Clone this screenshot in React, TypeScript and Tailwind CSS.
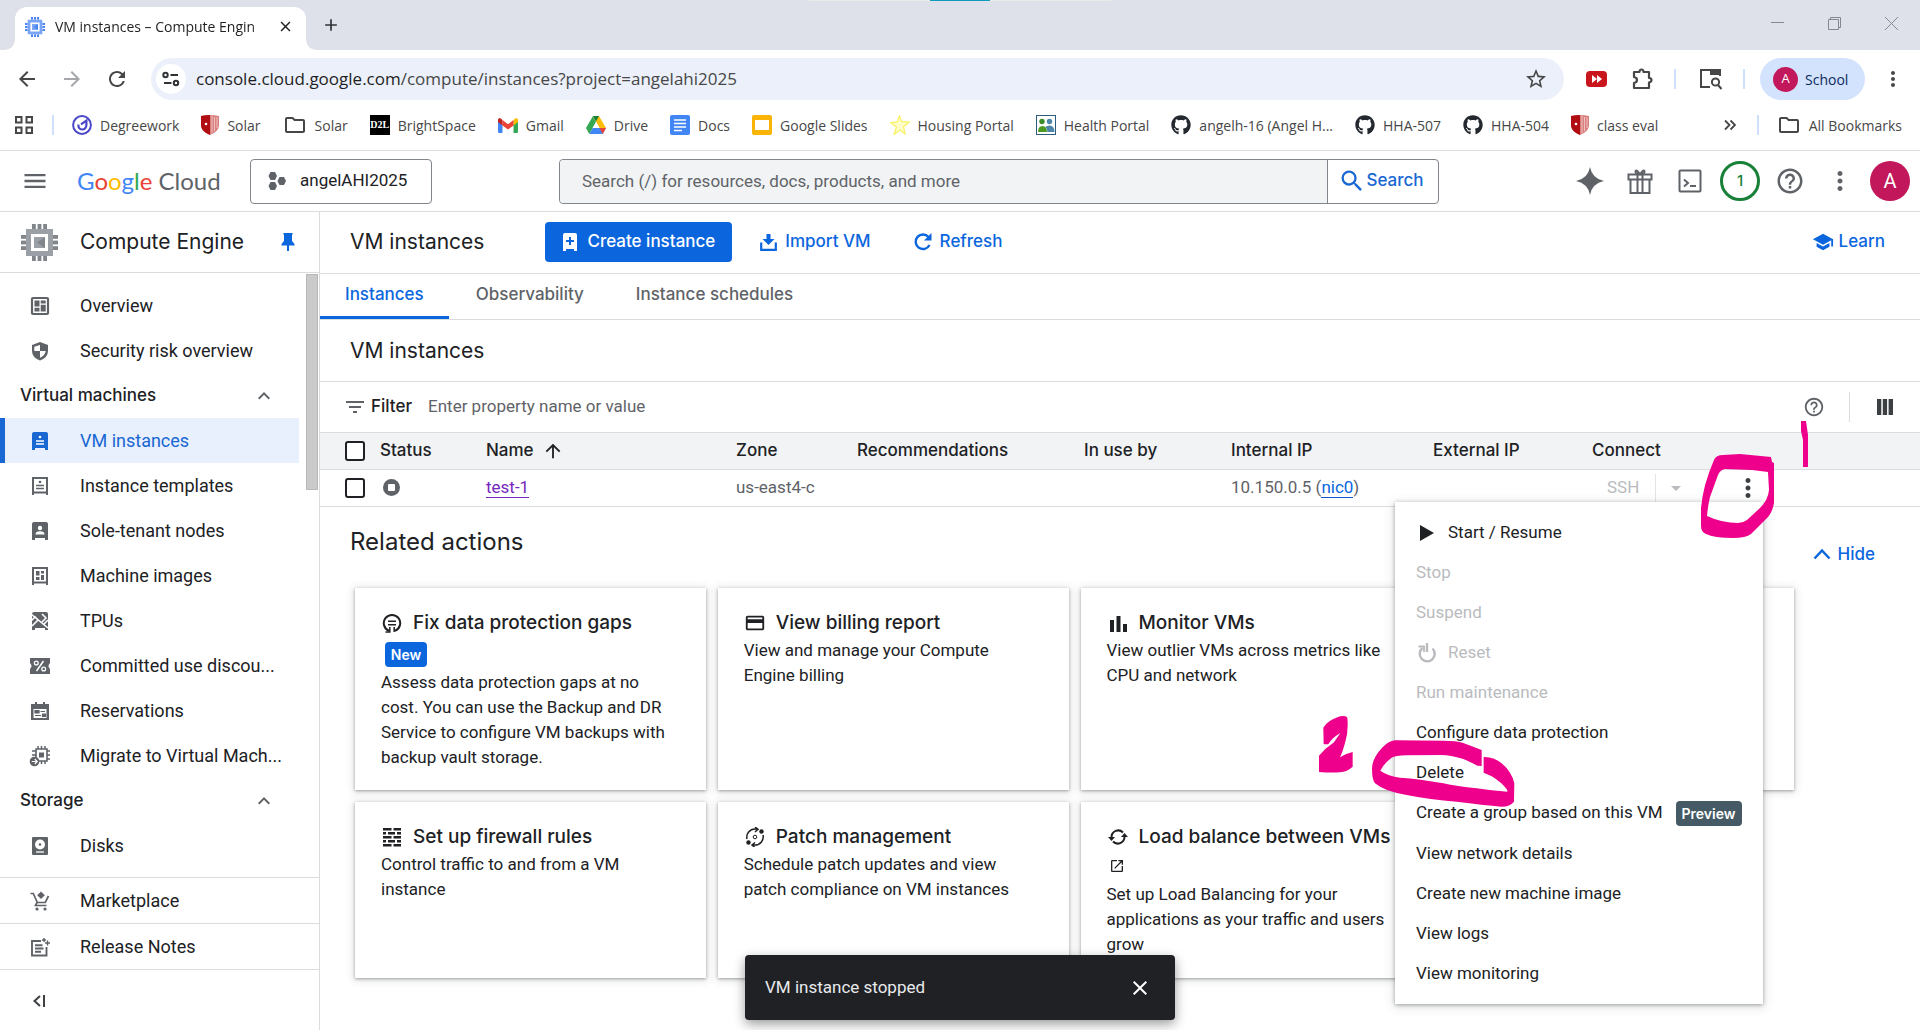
import type { ReactNode } from "react";
import {
  MdMenu, MdExpandLess, MdFilterList, MdArrowUpward, MdMoreVert, MdHelpOutline,
  MdArrowDropDown, MdSchool, MdRefresh, MdClose, MdOpenInNew, MdCreditCard, MdArrowBack,
  MdArrowForward, MdStarBorder, MdSearch, MdAdd, MdOutlineFolder,
} from "react-icons/md";
import { FaGithub } from "react-icons/fa";

const CHROME = "font-['Open_Sans','Noto_Sans',sans-serif]";
const GOOGLE = "font-['Inter','Roboto',sans-serif]";
const BODY = "font-['Roboto','Liberation_Sans',sans-serif]";

/* ---------- drawings ---------- */

function Chip({ className, body, light }: { className: string; body: string; light: string }) {
  const pins = [11, 16.6, 22.2];
  return (
    <svg viewBox="0 0 37 37" className={className} aria-hidden="true">
      {pins.map((p) => (
        <g key={p} fill={body}>
          <rect x={p} y="0" width="3.800" height="5" />
          <rect x={p} y="32" width="3.800" height="5" />
          <rect x="0" y={p} width="5" height="3.800" />
          <rect x="32" y={p} width="5" height="3.800" />
        </g>
      ))}
      <path fill={light} fillRule="evenodd" d="M5 5h27v27H5zM10 10v17h17V10z" />
      <rect x="13" y="13" width="11" height="11" fill={light} />
      <path d="M24 13v11l-8-5.500z" fill={body} />
    </svg>
  );
}

function DegreeIcon() {
  return (
    <svg viewBox="0 0 20 20" className="size-5" fill="none" stroke="#4a48c8">
      <circle cx="10" cy="10" r="8.900" strokeWidth="2" />
      <path d="M6.500 9.500c-.5 3 1.200 5 3.600 5 2.600 0 4.300-2 4.300-4.700V5.500L9 9.300" strokeWidth="2.200" />
    </svg>
  );
}

function ShieldBookmark() {
  return (
    <svg viewBox="0 0 18 20" className="h-5 w-[18px]">
      <path d="M0 1Q9-1 18 1v10q-1 6-9 9-8-3-9-9z" fill="#d9807f" />
      <path d="M0 1Q5 0 9 0v20q-8-3-9-9z" fill="#b00d12" />
      <path d="M11 1v17M13.500 2v14M16 2v11" stroke="#f2c9c8" strokeWidth=".9" />
      <circle cx="5" cy="9" r="1.300" fill="#fff" />
    </svg>
  );
}

function D2LIcon() {
  return (
    <span className="flex size-5 flex-col items-center justify-center bg-black font-['Liberation_Serif',serif] text-[10px] leading-3 font-bold text-white">
      D2L
    </span>
  );
}

function GmailIcon() {
  return (
    <svg viewBox="0 0 20 15" className="h-[15px] w-5">
      <path d="M0 2v11.500Q0 15 1.400 15H4.500V6z" fill="#4285f4" />
      <path d="M20 2v11.500Q20 15 18.600 15H15.500V6z" fill="#34a853" />
      <path d="M0 2Q0 0 2 0L4.500 2v5.500L0 4z" fill="#c5221f" />
      <path d="M20 2Q20 0 18 0l-2.500 2v5.500L20 4z" fill="#fbbc04" />
      <path d="M4.500 2L10 6.200 15.500 2v5.500L10 11.600 4.500 7.500z" fill="#ea4335" />
    </svg>
  );
}

function DriveIcon() {
  return (
    <svg viewBox="0 0 20 18" className="h-[18px] w-5">
      <path d="M7 0L0 12l3.300 6L10 6z" fill="#34a853" />
      <path d="M7 0h6l7 12h-6.500z" fill="#fbbc04" />
      <path d="M3.300 18h13.400l3.300-6H6.600z" fill="#4285f4" />
      <path d="M20 12h-6.500l3.200 6z" fill="#ea4335" />
      <path d="M7 0h6L10 5.500z" fill="#188038" />
      <path d="M10 6l3.500 6H6.600z" fill="#fff" />
    </svg>
  );
}

function DocsIcon() {
  return (
    <svg viewBox="0 0 20 20" className="size-5">
      <rect width="20" height="20" rx="2" fill="#4285f4" />
      <path d="M4 5h12M4 8.500h12M4 12h12M4 15.500h8" stroke="#fff" strokeWidth="1.700" />
    </svg>
  );
}

function SlidesIcon() {
  return (
    <svg viewBox="0 0 20 20" className="size-5">
      <rect width="20" height="20" rx="2" fill="#f9b406" />
      <rect x="3" y="5" width="14" height="10" fill="#fff" />
    </svg>
  );
}

function StarIcon() {
  return (
    <svg viewBox="0 0 20 20" className="size-5">
      <path d="M9.500 1l2 5.500L19.500 7l-6 4.500L15 19l-5-4-6 4.500L6.500 12 .5 7.500l6.500-.5z" fill="#fefcc8" stroke="#f8f266" strokeWidth="1.300" />
    </svg>
  );
}

function HealthIcon() {
  return (
    <svg viewBox="0 0 20 20" className="size-5">
      <rect x=".5" y=".5" width="19" height="19" fill="#fff" stroke="#2d5d7e" />
      <circle cx="6" cy="6.500" r="2.700" fill="#3c8a2b" />
      <circle cx="13.500" cy="6.500" r="2.700" fill="#4d86ab" />
      <path d="M2 17q0-6 4.500-6T11 17z" fill="#4a9a23" />
      <path d="M9.500 12q1-1.500 4-1.500 5 0 5 6.500h-7q0-3-2-5z" fill="#4d86ab" />
    </svg>
  );
}

function AppsIcon() {
  return (
    <svg viewBox="0 0 20 20" className="size-5" fill="none" stroke="#474747" strokeWidth="2">
      <path d="M2 2h5.500v5.500H2zM12.500 2H18v5.500h-5.500zM2 12.500h5.500V18H2zM12.500 12.500H18V18h-5.500z" />
    </svg>
  );
}

function TuneIcon() {
  return (
    <svg viewBox="0 0 18 16" className="h-4 w-[18px]" fill="none" stroke="#303236" strokeWidth="2">
      <circle cx="3.500" cy="4" r="2.200" />
      <path d="M8.500 4H16M2 12h7.500" />
      <circle cx="14" cy="12" r="2.200" />
    </svg>
  );
}

function PuzzleIcon() {
  return (
    <svg viewBox="0 0 24 24" className="size-6" fill="none" stroke="#474747" strokeWidth="2.200" strokeLinejoin="round">
      <path d="M4 5h5.500q0-2.500 2-2.500t2 2.500H19v6q2.500 0 2.500 2T19 15.500V21H4v-5q3-.5 3-3t-3-3z" />
    </svg>
  );
}

function LensIcon() {
  return (
    <svg viewBox="0 0 24 22" className="h-[22px] w-6" fill="none" stroke="#474747" strokeWidth="2">
      <path d="M11 19H2V2h19v6" />
      <path d="M12 2h9v4h-9z" fill="#474747" />
      <circle cx="16.500" cy="14" r="3.600" />
      <path d="M19 17l3.500 4" />
    </svg>
  );
}

const G60 = "#5f6368";

function NodeFrame({ children, filled }: { children: ReactNode; filled?: boolean }) {
  return (
    <svg viewBox="0 0 20 20" className="size-5" aria-hidden="true">
      {filled ? (
        <path d="M4 1h12q2 0 2 2v16h-3v-2H5v2H2V3q0-2 2-2z" fill="currentColor" />
      ) : (
        <path d="M3 19V2h14v17M3 16.500h14" fill="none" stroke="currentColor" strokeWidth="2" />
      )}
      {children}
    </svg>
  );
}

const NavIcons: Record<string, ReactNode> = {
  overview: (
    <svg viewBox="0 0 20 20" className="size-5" fill="none" stroke="currentColor">
      <rect x="2" y="2" width="16" height="16" rx="1" strokeWidth="2.200" />
      <path d="M4.500 4.500h5v6h-5zM10.700 4.500h5v3h-5zM4.500 11.700h5v3.800h-5zM10.700 8.700h5v6.800h-5z" fill="currentColor" stroke="none" />
    </svg>
  ),
  security: (
    <svg viewBox="0 0 20 20" className="size-5">
      <path d="M10 1l8 3v6q0 6.500-8 9.500-8-3-8-9.500V4z" fill="currentColor" />
      <path d="M10 4v6H4.300V5.800zM10 10h5.700q-.7 4.500-5.700 6.800z" fill="#fff" />
    </svg>
  ),
  vm: (
    <NodeFrame filled>
      <circle cx="10" cy="6" r="1.300" fill="#fff" />
      <path d="M6 10h8M6 13h8" stroke="#fff" strokeWidth="1.300" />
    </NodeFrame>
  ),
  template: (
    <NodeFrame>
      <circle cx="10" cy="6" r="1.300" fill="currentColor" />
      <path d="M6 9.500h8M6 12.500h8" stroke="currentColor" strokeWidth="1.400" />
    </NodeFrame>
  ),
  sole: (
    <NodeFrame filled>
      <circle cx="10" cy="7" r="2.200" fill="#fff" />
      <path d="M5.500 13.500q0-3.300 4.500-3.300t4.500 3.300z" fill="#fff" />
    </NodeFrame>
  ),
  image: (
    <NodeFrame>
      <path d="M6 5h3.500v4.500H6zM11 5h3v2.500h-3zM6 11h3.500v3H6zM11 9h3v5h-3z" fill="currentColor" />
    </NodeFrame>
  ),
  tpu: (
    <svg viewBox="0 0 20 20" className="size-5">
      <path d="M4 1h12q2 0 2 2v16h-3v-2H5v2H2V3q0-2 2-2z" fill="currentColor" />
      <path d="M1 3l17 14M1 10l4-4 3 3-6 6M12 3l4 4-4 4M18 9l-4 4" stroke="#fff" strokeWidth="1.600" fill="none" />
    </svg>
  ),
  discount: (
    <svg viewBox="0 0 22 18" className="h-[18px] w-[22px]">
      <path d="M1 1h20v5q-3 3 0 6v5H1v-5q3-3 0-6z" fill="currentColor" />
      <path d="M14.500 4l-7 10" stroke="#fff" strokeWidth="1.500" />
      <circle cx="7.300" cy="6" r="1.900" stroke="#fff" strokeWidth="1.300" fill="none" />
      <circle cx="14.700" cy="12" r="1.900" stroke="#fff" strokeWidth="1.300" fill="none" />
    </svg>
  ),
  reservation: (
    <svg viewBox="0 0 20 20" className="size-5">
      <path d="M5 1h2v2h6V1h2v2h4v16H1V3h4z" fill="currentColor" />
      <path d="M3.500 8h13v9h-13z" fill="#fff" />
      <path d="M5 9.500h4V12H5zM10.500 10.500H15M5 14.500h6M12.500 13.200h3v2.300h-3z" fill="currentColor" stroke="currentColor" strokeWidth="1.200" />
    </svg>
  ),
  migrate: (
    <svg viewBox="0 0 22 22" className="size-[22px]">
      <path d="M7 4h11v12H7z" fill="none" stroke="currentColor" strokeWidth="1.600" />
      <path d="M10 7.500h5v5h-5z" fill="currentColor" />
      <path d="M9 1v3M12.500 1v3M16 1v3M18 6h3M18 10h3M18 14h3M12.500 16v3M16 16v3M3 6h4M3 10h4" stroke="currentColor" strokeWidth="1.500" />
      <circle cx="5.500" cy="16.500" r="4.800" fill="currentColor" />
      <path d="M2.800 16.500H8M5.800 14l2.400 2.500L5.800 19" stroke="#fff" strokeWidth="1.200" fill="none" />
    </svg>
  ),
  disk: (
    <svg viewBox="0 0 20 20" className="size-5">
      <rect x="2" y="1" width="16" height="18" rx="1" fill="currentColor" />
      <circle cx="10" cy="8.500" r="5" fill="#fff" />
      <circle cx="10" cy="8.500" r="1.300" fill="currentColor" />
      <path d="M6 16h8" stroke="#fff" strokeWidth="1.300" />
    </svg>
  ),
  market: (
    <svg viewBox="0 0 20 20" className="size-5" fill="none" stroke="currentColor" strokeWidth="1.700">
      <path d="M.5 2.500h2.800l4 9h8L18.500 5M7 11.500l-1.500 3h11" />
      <path d="M11 .5l3.800 3.700L11 8 7.200 4.200z" fill="currentColor" stroke="none" />
      <circle cx="7" cy="18" r="1.600" fill="currentColor" stroke="none" />
      <circle cx="15" cy="18" r="1.600" fill="currentColor" stroke="none" />
    </svg>
  ),
  notes: (
    <svg viewBox="0 0 20 20" className="size-5" fill="none" stroke="currentColor" strokeWidth="1.900">
      <path d="M11 4H2v14.500h14.500V10M5 8.300h7.500M5 11.500h8.500M5 14.700h6" />
      <path d="M14 1v4M12 3h4M17.500 3.500v5M15 6h5" strokeWidth="1.400" />
    </svg>
  ),
};

const CardIcons: Record<string, ReactNode> = {
  backup: (
    <svg viewBox="0 0 20 20" className="size-5" fill="none" stroke="currentColor" strokeWidth="2">
      <path d="M7 17.800A8.200 8.200 0 1 1 13 17.800" />
      <path d="M6 8.300h8M6 11.700h8" strokeWidth="1.500" />
      <path d="M7.800 14v5H3.500M12.200 14v5" strokeWidth="1.500" />
    </svg>
  ),
  billing: <MdCreditCard className="size-[22px]" />,
  monitor: (
    <svg viewBox="0 0 20 20" className="size-5" fill="currentColor">
      <path d="M2 7h4v12H2zM8.500 3h4v16h-4zM15 11h4v8h-4z" />
    </svg>
  ),
  firewall: (
    <svg viewBox="0 0 20 20" className="size-5" fill="currentColor">
      <path d="M1 1h8.500v2.600H1zM11.500 1H19v2.600h-7.500zM1 5h3v2.600H1zM6 5h7v2.600H6zM15 5h4v2.600h-4zM1 9h8.500v2.600H1zM11.500 9H19v2.600h-7.500zM1 13h3v2.600H1zM6 13h7v2.600H6zM15 13h4v2.600h-4zM1 17h8.500v2.600H1zM11.500 17H19v2.600h-7.500z" />
    </svg>
  ),
  patch: (
    <svg viewBox="0 0 20 20" className="size-5" fill="none" stroke="currentColor" strokeWidth="1.500">
      <path d="M2 12A8.200 8.200 0 0 1 10 2h2M10 0l3 2.200L10 5M18 8a8.200 8.200 0 0 1-8 10H8M10 15.500L7 18l3 2.500" />
      <circle cx="10" cy="10" r="1.800" strokeWidth="1" />
      <circle cx="16.500" cy="4.500" r="2.200" fill="currentColor" stroke="none" />
      <circle cx="3.500" cy="15.500" r="2.200" fill="currentColor" stroke="none" />
    </svg>
  ),
  balance: (
    <svg viewBox="0 0 20 20" className="size-5" fill="none" stroke="currentColor" strokeWidth="2">
      <path d="M3.500 10A6.700 6.700 0 0 1 15 5.500M16.500 10A6.700 6.700 0 0 1 5 14.500" />
      <path d="M0 10h7l-3.500 4zM20 10h-7l3.500-4z" fill="currentColor" stroke="none" />
    </svg>
  ),
};

/* ---------- browser chrome ---------- */

function TabStrip() {
  return (
    <div className="relative flex h-[50px] items-end bg-[#dee1e9] pl-[15px]">
      <div className="absolute top-0 left-1/2 flex h-px w-[302px] -translate-x-1/2 justify-center bg-[#e9eae8]">
        <span className="h-px w-[60px] bg-[#0f9bbd]" />
      </div>
      <div className="relative flex h-[43px] w-[291px] items-center rounded-t-[12px] bg-white pr-3 pb-1 pl-[10px]">
        <svg viewBox="0 0 12 12" className="absolute bottom-0 -left-3 size-3 fill-white"><path d="M12 0v12H0Q12 12 12 0z" /></svg>
        <svg viewBox="0 0 12 12" className="absolute -right-3 bottom-0 size-3 fill-white"><path d="M0 0v12h12Q0 12 0 0z" /></svg>
        <Chip className="size-5" body="#4d86f0" light="#7aa5f5" />
        <span className="ml-[10px] flex-1 whitespace-nowrap text-[14px] text-[#1f1f1f] [mask-image:linear-gradient(to_right,black_92%,transparent)]">
          VM instances – Compute Engin
        </span>
        <button aria-label="Close tab" className="ml-2"><MdClose className="size-[17px] text-[#1f1f1f]" /></button>
      </div>
      <button aria-label="New tab" className="mb-[15px] ml-[15px]"><MdAdd className="size-5 text-[#303236]" /></button>
      <div className="mb-[19px] ml-auto flex items-center gap-[42px] pr-[21px] text-[#85888f]">
        <button aria-label="Minimize"><svg viewBox="0 0 15 15" className="size-[15px]" stroke="currentColor"><path d="M1 6.500h13" /></svg></button>
        <button aria-label="Restore"><svg viewBox="0 0 15 15" className="size-[15px]" stroke="currentColor" fill="none"><path d="M1.500 3.500h10v10h-10zM3.500 3.500v-2h10v10h-2" /></svg></button>
        <button aria-label="Close"><svg viewBox="0 0 15 15" className="size-[15px]" stroke="currentColor"><path d="M1 1l13 13M14 1L1 14" /></svg></button>
      </div>
    </div>
  );
}

function Rule() {
  return <span className="h-5 w-0.5 bg-[#cfe0fc]" />;
}

function Toolbar() {
  return (
    <div className="flex h-[50px] items-end bg-white pl-[15px] text-[#474747]">
      <div className="flex h-[42px] items-center gap-[21px]">
        <button aria-label="Back"><MdArrowBack className="size-6" /></button>
        <button aria-label="Forward" className="text-[#a5a7aa]"><MdArrowForward className="size-6" /></button>
        <button aria-label="Reload"><MdRefresh className="size-6" /></button>
      </div>
      <div className="ml-[22px] flex h-[42px] flex-1 items-center rounded-full bg-[#ebf0fa] pr-4 pl-[5px]">
        <button aria-label="Site information" className="flex size-[30px] items-center justify-center rounded-full bg-white"><TuneIcon /></button>
        <p className="ml-[10px] flex-1 text-[17px] text-[#474747]">
          <span className="text-[#1f1f1f]">console.cloud.google.com</span>/compute/instances?project=angelahi2025
        </p>
        <button aria-label="Bookmark this tab"><MdStarBorder className="size-6" /></button>
      </div>
      <div className="flex h-[42px] items-center">
        <button aria-label="Playback extension" className="ml-[22px] flex h-4 w-[21px] items-center justify-center rounded bg-[#c9161d]">
          <svg viewBox="0 0 12 8" className="h-2 w-3 fill-white"><path d="M1 0l5 4-5 4zM6 0l5 4-5 4z" /></svg>
        </button>
        <button aria-label="Extensions" className="mr-5 ml-[23px]"><PuzzleIcon /></button>
        <Rule />
        <button aria-label="Search this page" className="mr-5 ml-[23px]"><LensIcon /></button>
        <Rule />
        <button className="ml-[15px] flex h-[42px] w-[105px] items-center gap-[7px] rounded-full bg-[#d3e2fd] pl-[13px] text-[14px] text-[#0b2a5c]">
          <span className="flex size-[25px] items-center justify-center rounded-full bg-[#c2185b] text-[13px] text-white">A</span>
          School
        </button>
        <button aria-label="Browser menu" className="mr-[15px] ml-4"><MdMoreVert className="size-6" /></button>
      </div>
    </div>
  );
}

const bookmarks: [ReactNode, string][] = [
  [<DegreeIcon />, "Degreework"],
  [<ShieldBookmark />, "Solar"],
  [<MdOutlineFolder className="size-6 text-[#474747]" />, "Solar"],
  [<D2LIcon />, "BrightSpace"],
  [<GmailIcon />, "Gmail"],
  [<DriveIcon />, "Drive"],
  [<DocsIcon />, "Docs"],
  [<SlidesIcon />, "Google Slides"],
  [<StarIcon />, "Housing Portal"],
  [<HealthIcon />, "Health Portal"],
  [<FaGithub className="size-5 text-[#24292f]" />, "angelh-16 (Angel H..."],
  [<FaGithub className="size-5 text-[#24292f]" />, "HHA-507"],
  [<FaGithub className="size-5 text-[#24292f]" />, "HHA-504"],
  [<ShieldBookmark />, "class eval"],
];

function Bookmarks() {
  return (
    <nav aria-label="Bookmarks" className="flex h-[51px] items-center border-b border-[#dcdde0] bg-white pr-[18px] pl-[14px] text-[14px] whitespace-nowrap text-[#474747]">
      <button aria-label="Apps"><AppsIcon /></button>
      <span className="mr-[18px] ml-[18px] flex"><Rule /></span>
      <ul className="flex items-center gap-[22px]">
        {bookmarks.map(([icon, label], i) => (
          <li key={i}><a href="#" className="flex items-center gap-2">{icon}{label}</a></li>
        ))}
      </ul>
      <button aria-label="More bookmarks" className="ml-auto">
        <svg viewBox="0 0 12 12" className="size-3" fill="none" stroke="currentColor" strokeWidth="1.800"><path d="M1 1.500L5.500 6 1 10.500M6.500 1.500L11 6l-4.500 4.500" /></svg>
      </button>
      <span className="mr-[18px] ml-[21px] flex"><Rule /></span>
      <a href="#" className="flex items-center gap-2"><MdOutlineFolder className="size-6" />All Bookmarks</a>
    </nav>
  );
}

/* ---------- console header ---------- */

function ConsoleHeader() {
  return (
    <header className="flex h-[61px] items-center border-b border-[#dadce0] bg-white">
      <div className="flex w-[559px] shrink-0 items-center">
        <button aria-label="Main menu" className="ml-[21px] text-[#5f6368]"><MdMenu className="size-7" /></button>
        <a href="#" className="ml-7 font-['Lato',sans-serif] text-[24px] leading-8 text-[#5f6368]">
          <span className="text-[#4285f4]">G</span><span className="text-[#ea4335]">o</span><span className="text-[#fbbc04]">o</span>
          <span className="text-[#4285f4]">g</span><span className="text-[#34a853]">l</span><span className="text-[#ea4335]">e</span> Cloud
        </a>
        <button className="mr-[127px] ml-auto flex h-[45px] w-[182px] items-center gap-[14px] rounded border border-[#80868b] pl-[17px] text-[17px] text-[#202124]">
          <svg viewBox="0 0 18 18" className="size-[18px]" fill={G60}>
            <path d="M2.500 0h4.500l2 4-2 4H2.500L.5 4zM2.500 10h4.500l2 4-2 4H2.500l-2-4zM11.500 5H16l2 4-2 4h-4.500l-2-4z" />
          </svg>
          angelAHI2025
        </button>
      </div>
      <form className="flex h-[45px] max-w-[880px] flex-1 rounded border border-[#80868b]">
        <input aria-label="Search" placeholder="Search (/) for resources, docs, products, and more" className="min-w-0 flex-1 rounded-l bg-[#f1f3f4] pt-0.5 pl-[22px] text-[17px] text-[#202124] placeholder:text-[#5f6368]" />
        <button type="button" className={`flex w-[111px] items-center justify-center border-l border-[#80868b] pr-1 text-[17px] font-medium text-[#1967d2] ${GOOGLE}`}>
          <MdSearch className="size-7" />Search
        </button>
      </form>
      <div className="ml-auto flex items-center pr-[5px] text-[#5f6368] [&>button]:flex [&>button]:w-[50px] [&>button]:justify-center">
        <button aria-label="Gemini">
          <svg viewBox="0 0 28 28" className="size-7" fill="currentColor"><path d="M14 0q2 11.500 14 14-12 2.500-14 14Q12 16.500 0 14 12 11.500 14 0z" /></svg>
        </button>
        <button aria-label="Free trial">
          <svg viewBox="0 0 26 26" className="size-[26px]" fill="none" stroke="currentColor" strokeWidth="2"><path d="M1.500 6.500h23v5h-23zM3.500 11.500h19V25h-19zM10.500 6.500V25M15.500 6.500V25M13 6.500Q8 6 8.500 3.200 9.500 1 13 6.500q3.500-5.500 4.500-3.300Q18 6 13 6.500z" /></svg>
        </button>
        <button aria-label="Cloud Shell">
          <svg viewBox="0 0 24 24" className="size-6" fill="none" stroke="currentColor" strokeWidth="2"><rect x="1.500" y="1.500" width="21" height="21" rx="1" /><path d="M6 10.500l4 3.500-4 3.500M12 17h6" /></svg>
        </button>
        <button aria-label="Notifications">
          <span className={`flex size-10 items-center justify-center rounded-full border-[3px] border-[#188038] text-[15px] font-medium text-[#188038] ${GOOGLE}`}>1</span>
        </button>
        <button aria-label="Help"><MdHelpOutline className="size-[30px]" /></button>
        <button aria-label="Settings"><MdMoreVert className="size-[30px]" /></button>
        <button aria-label="Account">
          <span className="flex size-10 items-center justify-center rounded-full bg-[#c2185b] text-[20px] text-white">A</span>
        </button>
      </div>
    </header>
  );
}

/* ---------- sidebar ---------- */

function NavItem({ icon, label, active }: { icon: string; label: string; active?: boolean }) {
  return (
    <a
      href="#"
      className={`mr-5 flex h-[45px] items-center border-l-[5px] text-[18px] whitespace-nowrap ${active ? "border-[#1967d2] bg-[#e8f0fe] text-[#1967d2]" : "border-transparent text-[#202124]"}`}
    >
      <span className={`flex w-[70px] justify-center ${active ? "" : "text-[#5f6368]"}`}>{NavIcons[icon]}</span>
      <span className="ml-[5px]">{label}</span>
    </a>
  );
}

function NavHeading({ label }: { label: string }) {
  return (
    <button className={`flex h-[45px] w-full items-center justify-between pr-[43px] pl-5 text-[17px] font-medium text-[#202124] ${GOOGLE}`}>
      {label}<MdExpandLess className="size-6 text-[#5f6368]" />
    </button>
  );
}

function Sidebar() {
  return (
    <aside className="flex w-80 shrink-0 flex-col border-r border-[#dadce0]">
      <div className="flex h-[61px] items-center border-b border-[#dadce0] pl-[21px]">
        <Chip className="size-[37px]" body="#80868b" light="#9aa0a6" />
        <h1 className={`ml-[22px] text-[21px] text-[#202124] ${GOOGLE}`}>Compute Engine</h1>
        <button aria-label="Unpin menu" className="mr-6 ml-auto text-[#0b66de]">
          <svg viewBox="0 0 14 18" className="h-[18px] w-3.5" fill="currentColor"><path d="M2.500 0h9v1.500l-.5.500v6l2.500 3v1.500H8V18H6v-5.500H.5V11L3 8V2l-.5-.5z" /></svg>
        </button>
      </div>
      <div className="flex">
        <nav aria-label="Compute Engine" className="flex-1 pt-[10px] pb-[9px]">
          <NavItem icon="overview" label="Overview" />
          <NavItem icon="security" label="Security risk overview" />
          <NavHeading label="Virtual machines" />
          <NavItem icon="vm" label="VM instances" active />
          <NavItem icon="template" label="Instance templates" />
          <NavItem icon="sole" label="Sole-tenant nodes" />
          <NavItem icon="image" label="Machine images" />
          <NavItem icon="tpu" label="TPUs" />
          <NavItem icon="discount" label="Committed use discou..." />
          <NavItem icon="reservation" label="Reservations" />
          <NavItem icon="migrate" label="Migrate to Virtual Mach..." />
          <NavHeading label="Storage" />
          <NavItem icon="disk" label="Disks" />
        </nav>
        <span className="mt-px mr-px -ml-[13px] h-[216px] w-3 border border-[#b8b8b8] bg-[#cacaca]" />
      </div>
      <div className="border-t border-[#dadce0]"><NavItem icon="market" label="Marketplace" /></div>
      <div className="border-y border-[#dadce0]"><NavItem icon="notes" label="Release Notes" /></div>
      <button aria-label="Collapse menu" className="mt-6 ml-8 w-3.5">
        <svg viewBox="0 0 14 14" className="size-3.5" fill="none" stroke="#3c4043" strokeWidth="2"><path d="M8 2L2.500 7 8 12M12 1v12" /></svg>
      </button>
    </aside>
  );
}

/* ---------- instance menu ---------- */

const menuItems: { label: string; off?: boolean; icon?: ReactNode; badge?: string }[] = [
  { label: "Start / Resume", icon: <svg viewBox="0 0 14 16" className="h-4 w-3.5" fill="currentColor"><path d="M0 0l14 8-14 8z" /></svg> },
  { label: "Stop", off: true },
  { label: "Suspend", off: true },
  {
    label: "Reset",
    off: true,
    icon: (
      <svg viewBox="0 0 20 20" className="size-5" fill="none" stroke="currentColor" strokeWidth="2.400">
        <path d="M5.500 5A7.500 7.500 0 1 0 15.500 5.500M10 0v9" /><path d="M1.500 3.500h5.500V9" strokeWidth="1.800" />
      </svg>
    ),
  },
  { label: "Run maintenance", off: true },
  { label: "Configure data protection" },
  { label: "Delete" },
  { label: "Create a group based on this VM", badge: "Preview" },
  { label: "View network details" },
  { label: "Create new machine image" },
  { label: "View logs" },
  { label: "View monitoring" },
];

function ActionMenu() {
  return (
    <ul role="menu" className="absolute top-8 right-[157px] z-10 w-[368px] bg-white pt-[11px] pb-2.5 shadow-[0_1px_4px_rgba(60,64,67,0.45),0_2px_10px_2px_rgba(60,64,67,0.12)]">
      {menuItems.map((m) => (
        <li key={m.label} role="none">
          <button role="menuitem" disabled={m.off} className={`flex w-full items-center pl-[21px] text-[17px] ${m.badge ? "h-[41px]" : "h-10"} ${m.off ? "text-[#b9bbbe]" : "text-[#202124]"}`}>
            {m.icon && <span className="mr-2.5 flex w-[22px] justify-center">{m.icon}</span>}
            {m.label}
            {m.badge && <span className={`ml-[13px] flex h-[25px] items-center rounded-sm bg-[#455a64] px-[6px] text-[14px] font-semibold text-white ${GOOGLE}`}>{m.badge}</span>}
          </button>
        </li>
      ))}
    </ul>
  );
}

/* ---------- main column ---------- */

function CheckBox({ label }: { label: string }) {
  return <input type="checkbox" aria-label={label} className="block size-5 appearance-none rounded-[3px] border-2 border-[#202124] bg-white" />;
}

function InstanceTable() {
  const th = "p-0 text-left font-medium";
  return (
    <table className="w-full table-fixed border-collapse">
      <colgroup>
        <col className="w-[60px]" /><col className="w-[106px]" /><col className="w-[250px]" /><col className="w-[121px]" />
        <col className="w-[227px]" /><col className="w-[147px]" /><col className="w-[202px]" /><col className="w-[159px]" />
        <col className="w-[135px]" /><col />
      </colgroup>
      <thead>
        <tr className={`h-9 border-b border-[#dadce0] bg-[#f1f3f4] text-[17px] text-[#202124] ${GOOGLE}`}>
          <th className="p-0 pl-[25px]"><CheckBox label="Select all" /></th>
          <th className={th}>Status</th>
          <th className={th}><button className="flex items-center gap-2">Name<MdArrowUpward className="size-[22px]" /></button></th>
          <th className={th}>Zone</th>
          <th className={th}>Recommendations</th>
          <th className={th}>In use by</th>
          <th className={th}>Internal IP</th>
          <th className={th}>External IP</th>
          <th className={th}>Connect</th>
          <th className="p-0" />
        </tr>
      </thead>
      <tbody>
        <tr className="h-[37px] border-b border-[#dadce0] text-[17px] text-[#5f6368]">
          <td className="p-0 pl-[25px]"><CheckBox label="Select test-1" /></td>
          <td className="p-0 pl-[3px]">
            <svg viewBox="0 0 17 17" className="size-[17px]" role="img" aria-label="Stopped"><circle cx="8.500" cy="8.500" r="8.500" fill={G60} /><rect x="5" y="5" width="7" height="7" rx="1" fill="#fff" /></svg>
          </td>
          <td className="p-0"><a href="#" className="border-b border-[#7627bb] text-[#7627bb]">test-1</a></td>
          <td className="p-0">us-east4-c</td>
          <td className="p-0" />
          <td className="p-0" />
          <td className="p-0">10.150.0.5 (<a href="#" className="border-b border-[#0b57d0] text-[#0b66de]">nic0</a>)</td>
          <td className="p-0" />
          <td className="p-0">
            <div className="flex h-9 items-center pt-px">
              <button disabled className="ml-[15px] w-[48px] text-left text-[17px] text-[#b9bbbe]">SSH</button>
              <button disabled aria-label="SSH options" className="flex h-7 items-center border-l border-[#e3e4e6] pl-2"><MdArrowDropDown className="size-6 text-[#b9bbbe]" /></button>
            </div>
          </td>
          <td className="p-0">
            <div className="relative flex h-9 items-center pl-1.5">
              <button aria-label="Actions for test-1" aria-haspopup="menu" aria-expanded="true"><MdMoreVert className="size-[30px] text-[#3c4043]" /></button>
              <ActionMenu />
            </div>
          </td>
        </tr>
      </tbody>
    </table>
  );
}

const cards: { icon?: string; title?: string; text?: string; isNew?: boolean; external?: boolean }[] = [
  { icon: "backup", title: "Fix data protection gaps", text: "Assess data protection gaps at no cost. You can use the Backup and DR Service to configure VM backups with backup vault storage.", isNew: true },
  { icon: "billing", title: "View billing report", text: "View and manage your Compute Engine billing" },
  { icon: "monitor", title: "Monitor VMs", text: "View outlier VMs across metrics like CPU and network" },
  {},
  { icon: "firewall", title: "Set up firewall rules", text: "Control traffic to and from a VM instance" },
  { icon: "patch", title: "Patch management", text: "Schedule patch updates and view patch compliance on VM instances" },
  { icon: "balance", title: "Load balance between VMs", text: "Set up Load Balancing for your applications as your traffic and users grow", external: true },
];

function RelatedActions() {
  return (
    <section className="pr-[126px] pl-[35px]">
      <div className="-mr-[81px] flex items-start justify-between">
        <h2 className={`ml-[-5px] mt-[19px] text-[24px] leading-8 text-[#202124] ${GOOGLE}`}>Related actions</h2>
        <button className={`mt-[35px] flex items-center gap-[7px] text-[17px] leading-6 font-medium text-[#0b66de] ${GOOGLE}`}>
          <svg viewBox="0 0 18 12" className="h-3 w-[18px]" fill="none" stroke="currentColor" strokeWidth="2.500"><path d="M1.500 10.500L9 2.500l7.500 8" /></svg>
          Hide
        </button>
      </div>
      <div className="mt-[22px] grid grid-cols-4 gap-3">
        {cards.map((c, i) => (
          <article
            key={i}
            className={`bg-white pt-[22px] pr-[26px] pl-[26px] text-[#202124] shadow-[0_1px_3px_rgba(60,64,67,0.45),0_1px_8px_2px_rgba(60,64,67,0.12)] ${i < 4 ? "min-h-[202px]" : "min-h-[176px]"}`}
          >
            {c.title && (
              <>
                <h3 className={`flex items-center gap-2.5 text-[19px] leading-[26px] font-medium whitespace-nowrap ${GOOGLE}`}>
                  <span className="flex w-[22px] justify-center">{CardIcons[c.icon!]}</span>{c.title}
                </h3>
                {c.isNew && <span className={`mt-1.5 mb-[3px] ml-1 flex h-[25px] w-[42px] items-center justify-center rounded-sm bg-[#0b66de] text-[14px] font-semibold text-white ${GOOGLE}`}>New</span>}
                {c.external && <MdOpenInNew className="mt-2 mb-2 ml-0.5 size-4" />}
                <p className="mt-0.5 text-[17px] leading-[25px]">{c.text}</p>
              </>
            )}
          </article>
        ))}
      </div>
    </section>
  );
}

function Main() {
  const action = "flex items-center gap-2 text-[17px] font-medium text-[#0b66de]";
  return (
    <main className="relative min-w-0 flex-1">
      <div className={`flex h-[62px] items-center border-b border-[#dadce0] pr-[35px] pb-px pl-[30px] ${GOOGLE}`}>
        <h2 className="text-[21px] text-[#202124]">VM instances</h2>
        <button className="ml-[61px] flex h-10 items-center gap-[9px] rounded bg-[#0b66de] px-[17px] text-[17px] font-medium text-white">
          <svg viewBox="0 0 16 18" className="h-[18px] w-4"><path d="M3 0h10q2 0 2 2v16h-3v-2H4v2H1V2q0-2 2-2z" fill="#fff" /><path d="M8 4v8M4 8h8" stroke="#0b66de" strokeWidth="2" /></svg>
          Create instance
        </button>
        <button className={`ml-7 ${action}`}>
          <svg viewBox="0 0 17 17" className="size-[17px]"><path d="M6.500 0h4v5h4l-6 6-6-6h4z" fill="currentColor" /><path d="M1.200 8.500v7.300h14.600V8.500" fill="none" stroke="currentColor" strokeWidth="2.200" /></svg>
          Import VM
        </button>
        <button className={`ml-[43px] ${action}`}>
          <svg viewBox="0 0 18 18" className="size-[18px]" fill="none" stroke="currentColor" strokeWidth="2.400"><path d="M15.500 12A7.300 7.300 0 1 1 14.500 4" /><path d="M17.500 0v7.500H10z" fill="currentColor" stroke="none" /></svg>
          Refresh
        </button>
        <a href="#" className={`ml-auto ${action} gap-[5px]`}><MdSchool className="size-[22px]" />Learn</a>
      </div>

      <div role="tablist" className={`flex h-[46px] border-b border-[#dadce0] text-[17px] font-medium text-[#5f6368] ${GOOGLE}`}>
        <button role="tab" aria-selected="true" className="border-b-[3px] border-[#0b66de] px-[25px] text-[#0b66de]">Instances</button>
        <button role="tab" aria-selected="false" className="px-[27px] pb-[3px]">Observability</button>
        <button role="tab" aria-selected="false" className="px-[25px] pb-[3px]">Instance schedules</button>
      </div>

      <div className="flex h-[62px] items-center border-b border-[#dadce0] pl-[30px]">
        <h2 className={`text-[21px] text-[#202124] ${GOOGLE}`}>VM instances</h2>
      </div>

      <div className="flex h-[51px] items-center border-b border-[#dadce0] pl-[23px] text-[17px]">
        <MdFilterList className="size-6 text-[#5f6368]" />
        <label htmlFor="filter" className={`ml-1 font-medium text-[#202124] ${GOOGLE}`}>Filter</label>
        <input id="filter" placeholder="Enter property name or value" className="ml-4 flex-1 text-[#202124] outline-none placeholder:text-[#5f6368]" />
        <button aria-label="Filter help"><MdHelpOutline className="size-[22px] text-[#5f6368]" /></button>
        <span className="mr-[27px] ml-6 h-[30px] w-px bg-[#dadce0]" />
        <button aria-label="Columns" className="mr-[27px]">
          <svg viewBox="0 0 16 16" className="size-4" fill="#3c4043"><path d="M0 0h4.300v16H0zM5.800 0h4.300v16H5.800zM11.600 0H16v16h-4.400z" /></svg>
        </button>
      </div>

      <InstanceTable />
      <RelatedActions />
    </main>
  );
}

function Toast() {
  return (
    <div role="status" className="absolute bottom-[10px] left-1/2 z-20 flex h-[65px] w-[430px] -translate-x-1/2 items-center justify-between rounded bg-[#202124] pr-[23px] pl-5 text-[17px] text-[#e8eaed] shadow-[0_4px_12px_rgba(0,0,0,0.4)]">
      VM instance stopped
      <button aria-label="Dismiss"><MdClose className="size-6 text-white" /></button>
    </div>
  );
}

function InkMarks() {
  return (
    <svg viewBox="0 0 1920 1030" className="pointer-events-none absolute top-0 right-0 z-30 h-[1030px] w-[1920px]" fill="#ee008c" aria-hidden="true">
      <path d="M1801 421h5l2 14v32h-5v-27l-2-9z" />
      <path fillRule="evenodd" d="M1714 460Q1716 455 1723 455L1740 454 1771 457 1772 462 1774 463 1774 503Q1772 514 1766 519L1751 534Q1746 538 1733 538 1714 538 1706 534 1701 532 1701 526L1701 508Q1703 485 1714 460zM1718 475Q1720 470 1725 469L1752 470 1768 472 1769 490Q1768 500 1760 508L1747 520Q1743 523 1738 523 1722 523 1707 516 1708 505 1710 497z" />
      <g transform="translate(1310 705) scale(.3333)">
        <path d="M40 68Q50 48 90 34 110 30 112 38 116 80 106 110 98 140 90 157 105 146 128 141L128 185Q112 200 90 202 60 204 27 201L27 152Q45 130 72 112 80 100 91 84 66 98 55 118L41 118z" />
        <path d="M186 190Q187 160 215 130 235 108 255 106L400 107Q440 107 460 114L515 135 515 183 502 182Q480 170 460 162 420 150 395 150L290 151Q255 152 245 158 222 175 211 197 235 214 270 218 330 222 400 235 440 244 500 250 550 258 592 260L592 255Q575 232 545 214 530 206 521 203L521 156Q550 155 575 175 605 200 613 235L612 290Q600 305 575 305 520 300 440 290 360 284 290 270 225 260 195 235 186 225 186 190z" />
      </g>
    </svg>
  );
}

export default function App() {
  return (
    <div className={`relative flex min-h-screen flex-col overflow-hidden bg-white ${BODY}`}>
      <div className={CHROME}>
        <TabStrip />
        <Toolbar />
        <Bookmarks />
      </div>
      <ConsoleHeader />
      <div className="flex flex-1">
        <Sidebar />
        <Main />
      </div>
      <Toast />
      <InkMarks />
    </div>
  );
}
